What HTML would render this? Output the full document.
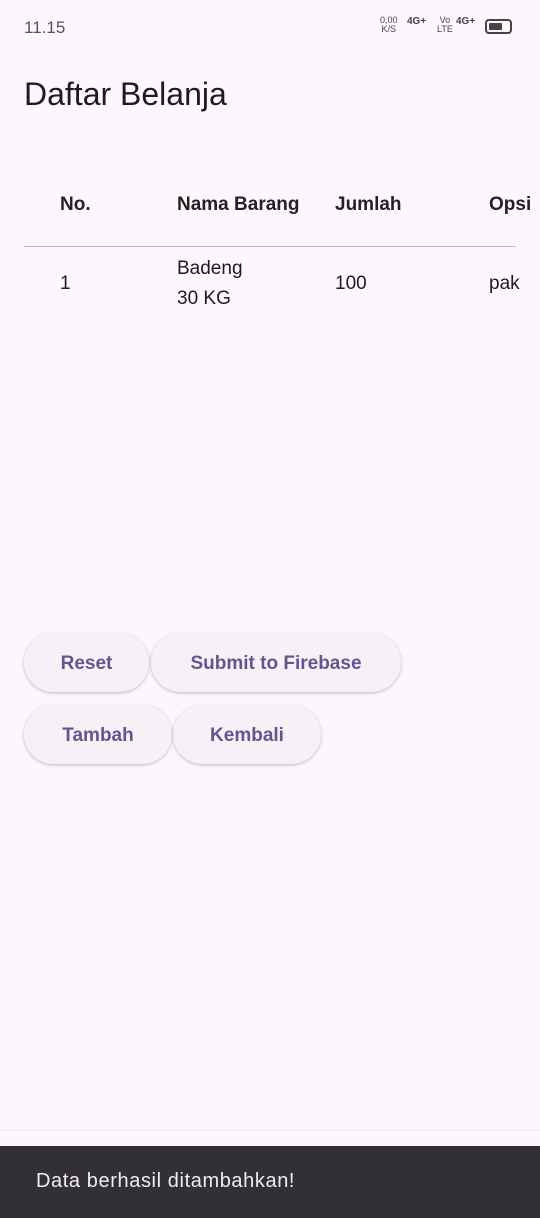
<!DOCTYPE html>
<html><head><meta charset="utf-8"><style>
*{margin:0;padding:0;box-sizing:border-box}
body{width:540px;height:1218px;background:#fdf7fd;font-family:"Liberation Sans",sans-serif;color:#1d1b20;position:relative;overflow:hidden}
.a{position:absolute;white-space:nowrap}
.h{font-size:19px;font-weight:bold;top:194px;color:#222}
.c{font-size:19px}
.btn{position:absolute;background:#f7f1f7;border-radius:30px;box-shadow:0 1px 3px rgba(0,0,0,.25);color:#65558f;font-size:19px;font-weight:bold;display:flex;align-items:center;justify-content:center;height:59px;padding-top:2px}
</style></head><body>
<div class="a" style="left:24px;top:18px;font-size:17px;color:#555">11.15</div>
<div class="a" style="left:380px;top:16px;font-size:9px;color:#444;line-height:9px;text-align:center">0,00<br>K/S</div>
<div class="a" style="left:407px;top:16px;font-size:10px;color:#444;font-weight:bold">4G+</div>
<div class="a" style="left:437px;top:16px;font-size:9px;color:#444;line-height:9px;text-align:center">Vo<br>LTE</div>
<div class="a" style="left:456px;top:16px;font-size:10px;color:#444;font-weight:bold">4G+</div>
<div class="a" style="left:485px;top:19px;width:27px;height:15px;border:2px solid #444;border-radius:4px"><div style="margin:2px;width:13px;height:7px;background:#444;border-radius:1px"></div></div>
<div class="a" style="left:24px;top:76px;font-size:32px">Daftar Belanja</div>
<div class="a h" style="left:60px">No.</div>
<div class="a h" style="left:177px">Nama Barang</div>
<div class="a h" style="left:335px">Jumlah</div>
<div class="a h" style="left:489px">Opsi</div>
<div class="a" style="left:24px;top:246px;width:492px;height:1px;background:#bdb8c0"></div>
<div class="a c" style="left:60px;top:273px">1</div>
<div class="a c" style="left:177px;top:254px;line-height:30px">Badeng<br>30 KG</div>
<div class="a c" style="left:335px;top:273px">100</div>
<div class="a c" style="left:489px;top:273px">pak</div>
<div class="btn" style="left:24px;top:633px;width:125px">Reset</div>
<div class="btn" style="left:151px;top:633px;width:250px">Submit to Firebase</div>
<div class="btn" style="left:24px;top:705px;width:148px">Tambah</div>
<div class="btn" style="left:173px;top:705px;width:148px">Kembali</div>
<div class="a" style="left:0;top:1129px;width:540px;height:2px;background:#f5eff5"></div>
<div class="a" style="left:0;top:1146px;width:540px;height:72px;background:#322f35"></div>
<div class="a" style="left:36px;top:1170px;font-size:20px;letter-spacing:.6px;color:#f1edf2">Data berhasil ditambahkan!</div>
</body></html>
